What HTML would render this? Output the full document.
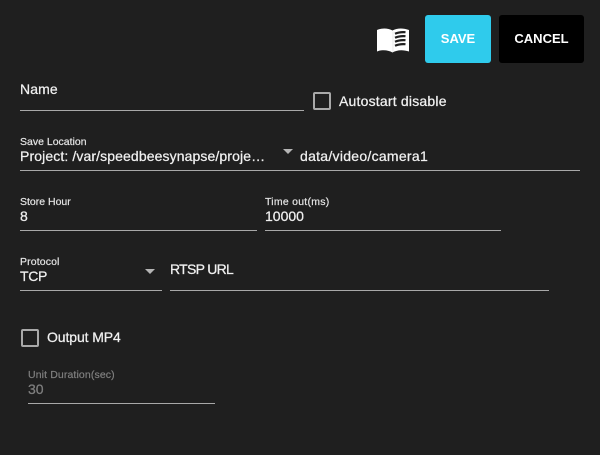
<!DOCTYPE html>
<html>
<head>
<meta charset="utf-8">
<style>
html,body{margin:0;padding:0;background:#1f1f1f;}
#r{position:relative;width:600px;height:455px;overflow:hidden;background:#1f1f1f;font-family:"Liberation Sans",sans-serif;color:#f0f0f0;}
.t{position:absolute;white-space:nowrap;font-size:14px;line-height:16px;-webkit-text-stroke:.25px currentColor;}
.s{position:absolute;white-space:nowrap;font-size:10.5px;line-height:12px;color:#e4e4e4;-webkit-text-stroke:.2px currentColor;}
.l{position:absolute;height:1px;background:#a8a8a8;}
.c{position:absolute;width:14px;height:14px;border:2px solid #a9a9a9;border-radius:2px;}
.a{position:absolute;width:0;height:0;border-left:5px solid transparent;border-right:5px solid transparent;border-top:5px solid #b5b5b5;}
.b{position:absolute;top:15px;height:48px;border-radius:3px;font-weight:bold;font-size:13px;line-height:48px;text-align:center;color:#fff;}
</style>
</head>
<body>
<div id="r">
<svg style="position:absolute;left:376px;top:27px" width="34" height="26" viewBox="0 0 34 26">
<path d="M1 3C6 .8 12 1 16.500 3.500C21 1 27 .8 33 3V24.500C27 22.500 21 22.800 16.500 25.500C12 22.800 6 22.500 1 24.500Z" fill="#fff"/>
<path d="M17 4.500V25" stroke="#ddd" stroke-width=".6"/>
<path d="M19 6.800C22 5.400 26 4.900 29.500 5.200M19 10.800C22 9.400 26 8.900 29.500 9.200M19 14.800C22 13.400 26 12.900 29.500 13.200M19 18.800C22 17.400 26 16.900 29.500 17.200" stroke="#1f1f1f" stroke-width="2.200" fill="none"/>
</svg>
<div class="b" style="left:425px;width:66px;background:#2fcbec;">SAVE</div>
<div class="b" style="left:499px;width:85px;background:#000;">CANCEL</div>

<div class="t" style="left:20px;top:81px;letter-spacing:.1px;">Name</div>
<div class="l" style="left:20px;top:110px;width:284px;"></div>
<div class="c" style="left:313px;top:92px;"></div>
<div class="t" style="left:339px;top:93px;letter-spacing:.2px;">Autostart disable</div>

<div class="s" style="left:20px;top:136px;">Save Location</div>
<div class="t" style="left:20px;top:148px;letter-spacing:.11px;">Project: /var/speedbeesynapse/proje…</div>
<div class="a" style="left:283px;top:149px;"></div>
<div class="t" style="left:300px;top:148px;letter-spacing:.28px;">data/video/camera1</div>
<div class="l" style="left:20px;top:170px;width:560px;"></div>

<div class="s" style="left:20px;top:196px;">Store Hour</div>
<div class="t" style="left:20px;top:208px;">8</div>
<div class="l" style="left:20px;top:230px;width:237px;"></div>
<div class="s" style="left:265px;top:196px;letter-spacing:.25px;">Time out(ms)</div>
<div class="t" style="left:265px;top:208px;">10000</div>
<div class="l" style="left:265px;top:230px;width:236px;"></div>

<div class="s" style="left:20px;top:256px;letter-spacing:.12px;">Protocol</div>
<div class="t" style="left:20px;top:268px;letter-spacing:-.3px;">TCP</div>
<div class="a" style="left:145px;top:269px;"></div>
<div class="l" style="left:20px;top:290px;width:142px;"></div>
<div class="t" style="left:170px;top:261px;letter-spacing:-.7px;">RTSP URL</div>
<div class="l" style="left:170px;top:290px;width:379px;"></div>

<div class="c" style="left:21px;top:329px;"></div>
<div class="t" style="left:47px;top:329px;letter-spacing:-.1px;">Output MP4</div>

<div class="s" style="left:28px;top:369px;color:#7f7f7f;letter-spacing:.12px;">Unit Duration(sec)</div>
<div class="t" style="left:28px;top:381px;color:#7f7f7f;">30</div>
<div class="l" style="left:28px;top:403px;width:187px;"></div>
</div>
</body>
</html>
